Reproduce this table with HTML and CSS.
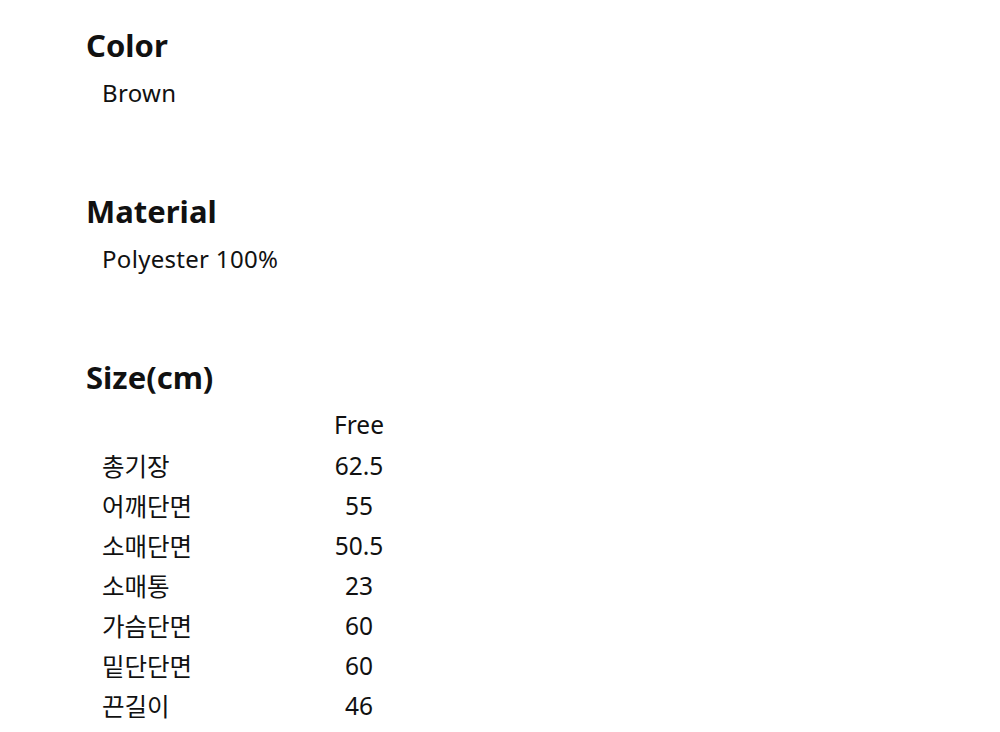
FILE: index.html
```html
<!DOCTYPE html>
<html lang="ko">
<head>
<meta charset="utf-8">
<link rel="stylesheet" href="styles.css">
</head>
<body>
<main class="page">
  <section class="sec">
    <h2 class="title">Color</h2>
    <p class="val">Brown</p>
  </section>
  <section class="sec">
    <h2 class="title">Material</h2>
    <p class="val">Polyester 100%</p>
  </section>
  <section class="sec">
    <h2 class="title">Size(cm)</h2>
    <div class="table">
      <span class="lab"></span><span class="num head">Free</span>
      <span class="lab">총기장</span><span class="num">62.5</span>
      <span class="lab">어깨단면</span><span class="num">55</span>
      <span class="lab">소매단면</span><span class="num">50.5</span>
      <span class="lab">소매통</span><span class="num">23</span>
      <span class="lab">가슴단면</span><span class="num">60</span>
      <span class="lab">밑단단면</span><span class="num">60</span>
      <span class="lab">끈길이</span><span class="num">46</span>
    </div>
  </section>
</main>
</body>
</html>
```
FILE: styles.css
```css
html, body {
  margin: 0;
  padding: 0;
  background: #fff;
}
body {
  font-family: "Noto Sans", "Noto Sans CJK KR", sans-serif;
  color: #111;
}
.page {
  padding: 25px 0 0 86px;
  display: flex;
  flex-direction: column;
  gap: 78px;
}
.sec {
  display: flex;
  flex-direction: column;
}
.title {
  margin: 0;
  font-size: 31px;
  font-weight: 700;
  line-height: 40px;
  height: 40px;
}
.val {
  margin: 8px 0 0 16px;
  font-size: 24px;
  letter-spacing: 0.3px;
  line-height: 40px;
}
.table {
  margin: 9px 0 0 16px;
  display: grid;
  grid-template-columns: 217px 80px;
  grid-auto-rows: 40px;
  font-size: 24.5px;
  line-height: 40px;
}
.lab {
  font-family: "Noto Sans CJK KR", sans-serif;
  font-size: 24.5px;
}
.num {
  text-align: center;
}
.head {
  margin-top: -1px;
}
```
